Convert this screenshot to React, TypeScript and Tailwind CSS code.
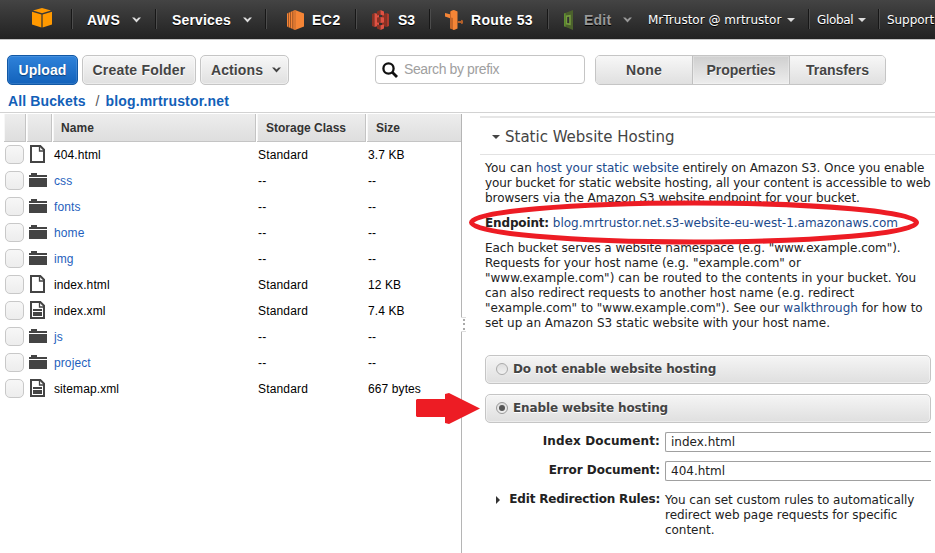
import type { ReactNode } from 'react';

type FileKind = 'page' | 'text' | 'folder';
const files: { name: string; kind: FileKind; storage: string; size: string }[] = [
  { name: '404.html', kind: 'page', storage: 'Standard', size: '3.7 KB' },
  { name: 'css', kind: 'folder', storage: '--', size: '--' },
  { name: 'fonts', kind: 'folder', storage: '--', size: '--' },
  { name: 'home', kind: 'folder', storage: '--', size: '--' },
  { name: 'img', kind: 'folder', storage: '--', size: '--' },
  { name: 'index.html', kind: 'page', storage: 'Standard', size: '12 KB' },
  { name: 'index.xml', kind: 'text', storage: 'Standard', size: '7.4 KB' },
  { name: 'js', kind: 'folder', storage: '--', size: '--' },
  { name: 'project', kind: 'folder', storage: '--', size: '--' },
  { name: 'sitemap.xml', kind: 'text', storage: 'Standard', size: '667 bytes' },
];

function Chevron({ className = '' }: { className?: string }) {
  return (
    <svg viewBox="0 0 9 6" className={`h-[6px] w-[9px] shrink-0 ${className}`}>
      <path d="M0 0.5h2.4L4.5 2.6 6.6 0.5H9L4.5 5.5z" fill="currentColor" />
    </svg>
  );
}

function Caret({ className = '' }: { className?: string }) {
  return (
    <svg viewBox="0 0 8 4" className={`h-[4px] w-[8px] shrink-0 ${className}`}>
      <path d="M0 0h8L4 4z" fill="currentColor" />
    </svg>
  );
}

function Divider() {
  return <div className="h-[20px] w-[2px] shrink-0 border-l border-r border-l-[#171717] border-r-[#4c4c4c]" />;
}

function NavItem({ className, children }: { className: string; children: ReactNode }) {
  return <div className={`flex h-full shrink-0 items-center ${className}`}>{children}</div>;
}

function AwsLogo() {
  return (
    <svg viewBox="0 0 20 20" className="h-[20px] w-[20px]">
      <path d="M1 2.6 10 0l9 2.6L10 5.2z" fill="#ff9900" />
      <path d="M0 3.8 9.4 6.4V19.6L0 16.5zM20 3.8 10.6 6.4V19.6L20 16.5z" fill="#ff9900" />
    </svg>
  );
}

function Ec2Icon() {
  return (
    <svg viewBox="0 0 17 20" className="h-[20px] w-[17px]">
      <path d="M8 0 17 3.5v13L8 20 0 16.500V3.500z" fill="#f58536" />
      <path d="M1.200 3H2v14.300l-.8-.3zM3.200 2.100H4V18l-.8-.3zM5.400 1.200h.9v18.100l-.9-.4z" fill="#8a4a22" />
      <path d="M7.600.2h.8v19.700l-.8-.3z" fill="#b4602a" />
    </svg>
  );
}

function S3Icon() {
  return (
    <svg viewBox="0 0 17 20" className="h-[20px] w-[17px]">
      <path d="M0 4 2.500 3v14L0 16z" fill="#8c3123" />
      <path d="M2.500 3 7 4.200v11.600L2.500 17z" fill="#e05243" />
      <path d="M17 4 14.500 3v14l2.500-1z" fill="#b03a2c" />
      <path d="M14.500 3 10 4.200v11.600l4.500 1.200z" fill="#8c3123" />
      <path d="M8.500 0 5 1.600V5.500l3.500-.8z" fill="#8c3123" />
      <path d="M8.500 0 12 1.600V5.500l-3.500-.8z" fill="#e05243" />
      <path d="M5 7.500l3.500-.4v5.800L5 12.500z" fill="#8c3123" />
      <path d="M12 7.500l-3.500-.4v5.800l3.500-.4z" fill="#e05243" />
      <path d="M5 14.500l3.500.8V20L5 18.400z" fill="#8c3123" />
      <path d="M12 14.500l-3.500.8V20l3.500-1.600z" fill="#e05243" />
    </svg>
  );
}

function Route53Icon() {
  return (
    <svg viewBox="0 0 18 20" className="h-[20px] w-[18px]">
      <path d="M0 3l5 1.300v4L0 6.500z" fill="#f58536" />
      <path d="M5 1.500 9 0v20l-4-1.500z" fill="#c76729" />
      <path d="M6 1.100 9 0l3.500 1.500v17L9 20l-1-.4V8L6 7.500z" fill="#f58536" />
      <path d="M12.500 11H16V9.800l2 .6v3.200l-2 .5V13h-3.500z" fill="#b4602a" />
    </svg>
  );
}

function EditIcon() {
  return (
    <svg viewBox="0 0 9 20" className="h-[20px] w-[9px]">
      <path fillRule="evenodd" d="M0 3.600 9 0v20L0 16.200zM2.200 6v8.300l4.300.7V5z" fill="#4b612c" />
      <path d="M0 3.600 1.600 3v13.800L0 16.200z" fill="#5f8f31" />
      <path d="M1.800 5.500 6.800 4.800V15.300l-5-.9zM3.200 7v6l2 .3V6.800z" fillRule="evenodd" fill="#759c3e" />
    </svg>
  );
}

function FileIcon({ kind }: { kind: FileKind }) {
  if (kind === 'folder') {
    return (
      <svg viewBox="0 0 18 14" className="h-[14px] w-[18px]" shapeRendering="crispEdges">
        <path d="M0 2h2V0h6v2h10v2H0zM0 5h18v9H0z" fill="#444" />
      </svg>
    );
  }
  return (
    <svg viewBox="0 0 15 18" className="ml-[1px] h-[18px] w-[15px]">
      <path d="M1 1h9.300L14 4.700V17H1z" fill="#fff" stroke="#444" strokeWidth="2" />
      <path d="M9.500 1v5H14" fill="none" stroke="#444" strokeWidth="1.300" />
      {kind === 'text' && <path d="M3 8h9v2H3zM3 11h9v4H3z" fill="#444" />}
    </svg>
  );
}

const button =
  'flex h-[30px] shrink-0 items-center rounded-[5px] border border-[#c5c5c5] bg-linear-to-b from-[#f7f7f7] to-[#e0e0e0] text-[14px] font-bold text-[#444] shadow-[inset_0_0_0_1px_rgba(255,255,255,0.4)] [text-shadow:0_1px_0_#fff]';

const headCell =
  'flex h-[28px] items-center border-b border-[#c4c4c4] bg-linear-to-b from-[#ededed] to-[#dedede] shadow-[inset_1px_0_0_#f7f7f7]';

function HostingOption({ label, checked }: { label: string; checked?: boolean }) {
  return (
    <div className="flex h-[29px] w-[446px] items-center rounded-[5px] border border-[#c5c5c5] bg-linear-to-b from-[#f5f5f5] to-[#dfdfdf] pl-[10px] shadow-[inset_0_0_0_1px_rgba(255,255,255,0.4)]">
      <span
        className={`mb-px flex size-[12px] items-center justify-center rounded-full border bg-linear-to-b from-[#dedede] to-[#f1f1f1] ${checked ? 'border-[#999]' : 'border-[#aaa]'}`}
      >
        {checked && <span className="size-[6px] rounded-full bg-[#555]" />}
      </span>
      <span className="ml-[5px] text-[12px] font-bold tracking-[-0.13px] text-[#444] [text-shadow:0_1px_0_#fff]">{label}</span>
    </div>
  );
}

function Header() {
  return (
    <header className="flex h-[40px] w-full items-center overflow-hidden border-b border-[#c4c4c4] bg-linear-to-b from-[#444] to-[#222] pb-px text-[14px] font-bold whitespace-nowrap text-white [text-shadow:0_1px_0_#000]">
      <NavItem className="w-[71px] pb-[2px] pl-[32px]"><AwsLogo /></NavItem>
      <Divider />
      <NavItem className="w-[82px] pt-[2px] pl-[14px]"><span className="tracking-[0.5px]">AWS</span><Chevron className="ml-[12px] text-[#ddd]" /></NavItem>
      <Divider />
      <NavItem className="w-[108px] pt-[2px] pl-[15px]"><span className="tracking-[0.17px]">Services</span><Chevron className="ml-[12px] text-[#ddd]" /></NavItem>
      <Divider />
      <NavItem className="w-[88px] pt-px pl-[20px]"><Ec2Icon /><span className="mt-px ml-[8px] tracking-[0.5px]">EC2</span></NavItem>
      <Divider />
      <NavItem className="w-[72px] pt-px pl-[15px]"><S3Icon /><span className="mt-px ml-[9px]">S3</span></NavItem>
      <Divider />
      <NavItem className="w-[116px] pt-px pl-[14px]"><Route53Icon /><span className="mt-px ml-[8px] tracking-[0.35px]">Route 53</span></NavItem>
      <Divider />
      <NavItem className="w-[99px] pt-px pl-[15px] text-[#999]"><EditIcon /><span className="mt-px ml-[11px] tracking-[0.2px]">Edit</span><Chevron className="ml-[12px]" /></NavItem>
      <NavItem className='w-[160px] pt-px font-["DejaVu_Sans",sans-serif] text-[12px] font-normal'>MrTrustor @ mrtrustor<Caret className="ml-[6px] text-[#ddd]" /></NavItem>
      <Divider />
      <NavItem className='w-[68px] pt-px pl-[7px] font-["DejaVu_Sans",sans-serif] text-[12px] font-normal'><span className="tracking-[-0.35px]">Global</span><Caret className="ml-[5px] text-[#ddd]" /></NavItem>
      <Divider />
      <NavItem className='pt-px pl-[7px] font-["DejaVu_Sans",sans-serif] text-[12px] font-normal tracking-[-0.05px]'>Support</NavItem>
    </header>
  );
}

function Toolbar() {
  return (
    <div className="flex h-[45px] items-end pl-[7px]">
      <button className="flex h-[30px] w-[71px] items-center justify-center rounded-[5px] border border-[#1158a5] bg-linear-to-b from-[#2e82da] to-[#1262bb] text-[14px] font-bold tracking-[0.1px] text-white shadow-[inset_0_0_0_1px_rgba(255,255,255,0.12)] [text-shadow:0_1px_1px_#0b3e79]">Upload</button>
      <button className={`${button} ml-[4px] w-[114px] justify-center tracking-[0.2px]`}>Create Folder</button>
      <button className={`${button} ml-[4px] w-[89px] pl-[10px]`}><span className="tracking-[0.1px]">Actions</span><Chevron className="mb-px ml-[9px]" /></button>
      <div className="mb-px ml-[86px] flex h-[29px] w-[210px] items-center rounded-[4px] border border-[#c5c5c5] pl-[6px]">
        <svg viewBox="0 0 16 16" className="h-[16px] w-[16px]">
          <circle cx="6.500" cy="6.500" r="5.100" fill="none" stroke="#111" strokeWidth="2.300" />
          <path d="M10.300 10.300 15 15" stroke="#111" strokeWidth="2.800" />
        </svg>
        <span className="ml-[6px] text-[14px] tracking-[-0.38px] text-[#a0a0a0]">Search by prefix</span>
      </div>
      <div className="ml-[10px] flex h-[30px] w-[291px] overflow-hidden rounded-[5px] border border-[#c5c5c5] text-[14px] font-bold text-[#444] [text-shadow:0_1px_0_#fff]">
        <div className="flex w-[96px] items-center justify-center bg-linear-to-b from-[#f7f7f7] to-[#e0e0e0] tracking-[0.2px]">None</div>
        <div className="flex w-[98px] items-center justify-center border-x border-[#c0c0c0] bg-linear-to-b from-[#cfcfcf] to-[#ededed] shadow-[inset_0_0_0_1px_rgba(255,255,255,0.25)]">Properties</div>
        <div className="flex flex-1 items-center justify-center bg-linear-to-b from-[#f7f7f7] to-[#e0e0e0]">Transfers</div>
      </div>
    </div>
  );
}

function FileTable() {
  return (
    <section className="w-[462px] shrink-0 border-r border-[#b5b5b5] pl-[4px] text-[12px]">
      <div className="-mb-px flex gap-px font-bold text-[#333]">
        <div className={`${headCell} w-[22px] border-r`} />
        <div className={`${headCell} w-[25px] border-r`} />
        <div className={`${headCell} w-[203px] border-r pl-[8px] tracking-[0.1px]`}>Name</div>
        <div className={`${headCell} w-[109px] border-r pl-[9px]`}>Storage Class</div>
        <div className={`${headCell} flex-1 pl-[9px]`}>Size</div>
      </div>
      {files.map((file) => (
        <div key={file.name} className="flex h-[26px] items-center text-black">
          <div className="mt-px ml-px size-[19px] shrink-0 rounded-[5px] border border-[#c8c8c8] bg-linear-to-b from-[#f7f7f7] to-[#ededed]" />
          <div className="ml-[5px] w-[25px] shrink-0"><FileIcon kind={file.kind} /></div>
          <div className={`w-[204px] shrink-0 pt-[2px] tracking-[0.1px] ${file.kind === 'folder' ? 'text-[#1f5fbd]' : ''}`}>{file.name}</div>
          <div className="w-[110px] shrink-0 pt-[2px] tracking-[0.16px]">{file.storage}</div>
          <div className="pt-[2px] tracking-[0.1px]">{file.size}</div>
        </div>
      ))}
    </section>
  );
}

function Properties() {
  return (
    <section className='w-[473px] pt-[2px] pl-[18px] font-["DejaVu_Sans",sans-serif] text-[12px] leading-[15px] whitespace-nowrap text-[#222]'>
      <div className="h-[2px] bg-[#e6e6e6]" />
      <div className="flex h-[37px] items-center border-b border-[#e2e2e2] pt-[2px] pl-[12px] text-[15px] text-[#444]">
        <Caret className="mr-[5px]" />Static Website Hosting
      </div>
      <div className="pt-[6px] pl-[5px]">
        <p className="tracking-[-0.04px]">
          <span className="tracking-[0.14px]">You can </span><span className="text-[#1c4a8c]">host your static website</span> <span className="tracking-[-0.08px]">entirely on Amazon S3. Once you enable</span><br />
          <span className="tracking-[-0.095px]">your bucket for static website hosting, all your content is accessible to web</span><br />
          browsers via the Amazon S3 website endpoint for your bucket.
        </p>
        <p className="mt-[10px]">
          <b className="tracking-[-0.15px]">Endpoint:</b> <span className="tracking-[-0.015px] text-[#1c4a8c]">blog.mrtrustor.net.s3-website-eu-west-1.amazonaws.com</span>
        </p>
        <p className="mt-[10px]">
          <span className="tracking-[-0.05px]">Each bucket serves a website namespace (e.g. "www.example.com").</span><br />
          <span className="tracking-[-0.02px]">Requests for your host name (e.g. "example.com" or</span><br />
          <span className="tracking-[0.02px]">"www.example.com") can be routed to the contents in your bucket. You</span><br />
          <span className="tracking-[-0.03px]">can also redirect requests to another host name (e.g. redirect</span><br />
          "example.com" to "www.example.com"). See our <span className="text-[#1c4a8c]">walkthrough</span> for how to<br />
          <span className="tracking-[-0.02px]">set up an Amazon S3 static website with your host name.</span>
        </p>
        <div className="mt-[24px] flex flex-col gap-[10px]">
          <HostingOption label="Do not enable website hosting" />
          <HostingOption label="Enable website hosting" checked />
        </div>
        <div className="mt-[9px] grid w-[446px] grid-cols-[175px_1fr] gap-x-[5px] gap-y-[9px]">
          <b className="pt-[2px] text-right tracking-[0.14px]">Index Document:</b>
          <div className="flex h-[20px] items-center rounded-l-[2px] border border-r-0 border-[#a0a0a0] pl-[5px]">index.html</div>
          <b className="pt-[2px] text-right tracking-[-0.04px]">Error Document:</b>
          <div className="flex h-[20px] items-center rounded-l-[2px] border border-r-0 border-[#a0a0a0] pl-[5px]">404.html</div>
          <div className="flex h-[20px] items-center pb-[1px] pl-[11px]">
            <svg viewBox="0 0 4 8" className="mr-[8px] h-[8px] w-[4px] shrink-0"><path d="M0 0v8l4-4z" fill="#333" /></svg>
            <b className="flex-1 text-right tracking-[-0.18px]">Edit Redirection Rules:</b>
          </div>
          <p className="pt-[3px] tracking-[-0.04px]">
            You can set custom rules to automatically<br />redirect web page requests for specific<br />content.
          </p>
        </div>
      </div>
    </section>
  );
}

export default function App() {
  return (
    <div className='relative h-[553px] w-[935px] overflow-hidden bg-white font-["Liberation_Sans",Arial,sans-serif]'>
      <Header />
      <Toolbar />
      <nav className="flex h-[28px] items-center border-b border-[#d2d2d2] pt-[5px] pl-[8px] text-[14px] font-bold text-[#1260b8]">
        <span className="tracking-[0.12px]">All Buckets</span>
        <span className="ml-[10px] font-normal text-[#555]">/</span>
        <span className="ml-[6px] tracking-[0.17px]">blog.mrtrustor.net</span>
      </nav>
      <main className="mt-px flex h-[439px]">
        <FileTable />
        <Properties />
      </main>
      <div className="absolute top-[317px] left-[461px] flex h-[15px] w-[5px] flex-col items-center justify-around border-y border-[#ddd] bg-white">
        <span className="size-[2px] bg-[#aaa]" />
        <span className="size-[2px] bg-[#aaa]" />
        <span className="size-[2px] bg-[#aaa]" />
      </div>
      <svg viewBox="0 0 935 553" className="pointer-events-none absolute inset-0 h-[553px] w-[935px]">
        <ellipse cx="694" cy="222.500" rx="222.500" ry="19.500" fill="none" stroke="#ed1c24" strokeWidth="5" />
        <path d="M417 399h28v-5l4-1 31 15.500L449 424l-4-1v-6h-28l-1-1v-16z" fill="#ed1c24" />
      </svg>
    </div>
  );
}
